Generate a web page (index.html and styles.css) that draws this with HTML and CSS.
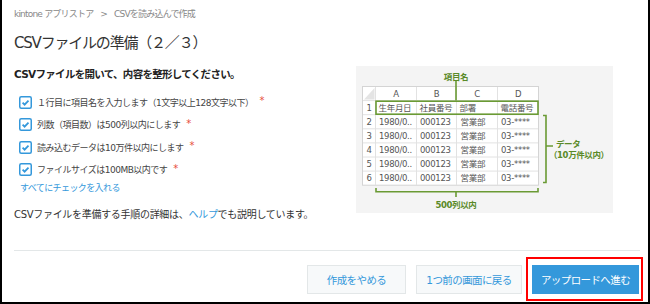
FILE: index.html
```html
<!DOCTYPE html>
<html lang="ja">
<head>
<meta charset="utf-8">
<title>CSVファイルの準備</title>
<link rel="stylesheet" href="styles.css">
</head>
<body>
<div class="page">
  <nav class="crumbs"><span>kintone アプリストア</span><span class="sep">&gt;</span><span>CSVを読み込んで作成</span></nav>
  <h1 class="title">CSVファイルの準備（２／３）</h1>
  <div class="content">
    <div class="main">
      <p class="lead">CSVファイルを開いて、内容を整形してください。</p>
      <ul class="checks">
        <li><svg class="box" viewBox="0 0 13 13"><rect x="0.75" y="0.75" width="11.5" height="11.5" rx="1.5" fill="#fff" stroke="#3498db" stroke-width="1.5"/><path d="M3.6 6.6 L5.6 8.6 L9.5 4.6" fill="none" stroke="#3498db" stroke-width="1.8"/></svg><span>１行目に項目名を入力します（1文字以上128文字以下）</span><span class="req">*</span></li>
        <li><svg class="box" viewBox="0 0 13 13"><rect x="0.75" y="0.75" width="11.5" height="11.5" rx="1.5" fill="#fff" stroke="#3498db" stroke-width="1.5"/><path d="M3.6 6.6 L5.6 8.6 L9.5 4.6" fill="none" stroke="#3498db" stroke-width="1.8"/></svg><span>列数（項目数）は500列以内にします</span><span class="req">*</span></li>
        <li><svg class="box" viewBox="0 0 13 13"><rect x="0.75" y="0.75" width="11.5" height="11.5" rx="1.5" fill="#fff" stroke="#3498db" stroke-width="1.5"/><path d="M3.6 6.6 L5.6 8.6 L9.5 4.6" fill="none" stroke="#3498db" stroke-width="1.8"/></svg><span>読み込むデータは10万件以内にします</span><span class="req">*</span></li>
        <li><svg class="box" viewBox="0 0 13 13"><rect x="0.75" y="0.75" width="11.5" height="11.5" rx="1.5" fill="#fff" stroke="#3498db" stroke-width="1.5"/><path d="M3.6 6.6 L5.6 8.6 L9.5 4.6" fill="none" stroke="#3498db" stroke-width="1.8"/></svg><span>ファイルサイズは100MB以内です</span><span class="req">*</span></li>
      </ul>
      <a class="check-all">すべてにチェックを入れる</a>
      <p class="help">CSVファイルを準備する手順の詳細は、<a class="link">ヘルプ</a>でも説明しています。</p>
    </div>
    <figure class="figure">
      <svg class="diagram" width="257" height="147" viewBox="0 0 257 147">
        <rect x="6.5" y="20.5" width="176" height="98.7" fill="#fff" stroke="#d4d4d4"/>
        <g stroke="#e2e2e2" stroke-width="1">
          <line x1="7" y1="34.6" x2="182" y2="34.6"/>
          <line x1="7" y1="48.7" x2="182" y2="48.7"/>
          <line x1="7" y1="62.8" x2="182" y2="62.8"/>
          <line x1="7" y1="76.9" x2="182" y2="76.9"/>
          <line x1="7" y1="91" x2="182" y2="91"/>
          <line x1="7" y1="105.1" x2="182" y2="105.1"/>
          <line x1="19.5" y1="21" x2="19.5" y2="119"/>
          <line x1="60.5" y1="21" x2="60.5" y2="119"/>
          <line x1="100.5" y1="21" x2="100.5" y2="119"/>
          <line x1="141.5" y1="21" x2="141.5" y2="119"/>
        </g>
        <polygon points="18.5,22 18.5,33.6 8,33.6" fill="#e4e4e4"/>
        <g class="cell">
          <text x="40" y="30.8" text-anchor="middle">A</text>
          <text x="80.5" y="30.8" text-anchor="middle">B</text>
          <text x="121" y="30.8" text-anchor="middle">C</text>
          <text x="162" y="30.8" text-anchor="middle">D</text>
          <text x="13" y="44.9" text-anchor="middle">1</text>
          <text x="13" y="59" text-anchor="middle">2</text>
          <text x="13" y="73.1" text-anchor="middle">3</text>
          <text x="13" y="87.2" text-anchor="middle">4</text>
          <text x="13" y="101.3" text-anchor="middle">5</text>
          <text x="13" y="115.4" text-anchor="middle">6</text>
          <text x="22.5" y="44.9">生年月日</text>
          <text x="63.5" y="44.9">社員番号</text>
          <text x="103.5" y="44.9">部署</text>
          <text x="144.5" y="44.9">電話番号</text>
          <text x="23" y="59">1980/0..</text><text x="64" y="59">000123</text><text x="104.5" y="59">営業部</text><text x="145" y="59">03-****</text>
          <text x="23" y="73.1">1980/0..</text><text x="64" y="73.1">000123</text><text x="104.5" y="73.1">営業部</text><text x="145" y="73.1">03-****</text>
          <text x="23" y="87.2">1980/0..</text><text x="64" y="87.2">000123</text><text x="104.5" y="87.2">営業部</text><text x="145" y="87.2">03-****</text>
          <text x="23" y="101.3">1980/0..</text><text x="64" y="101.3">000123</text><text x="104.5" y="101.3">営業部</text><text x="145" y="101.3">03-****</text>
          <text x="23" y="115.4">1980/0..</text><text x="64" y="115.4">000123</text><text x="104.5" y="115.4">営業部</text><text x="145" y="115.4">03-****</text>
        </g>
        <g fill="none" stroke="#6a9a34" stroke-width="1.6">
          <rect x="20" y="35.2" width="162" height="13"/>
          <line x1="100" y1="15" x2="100" y2="34.6"/>
          <path d="M187 49.5 H190 V116.5 H187 M190 80 H197"/>
          <path d="M20 122 V125.8 H182 V122 M100 125.8 V131"/>
        </g>
        <g class="note">
          <text x="100" y="14" text-anchor="middle">項目名</text>
          <text x="200" y="80.5">データ</text>
          <text x="193" y="91.5">（10万件以内）</text>
          <text x="100" y="141.5" text-anchor="middle">500列以内</text>
        </g>
      </svg>
    </figure>
  </div>
  <hr class="rule">
  <div class="actions">
    <button class="btn btn-cancel">作成をやめる</button>
    <button class="btn btn-back">1つ前の画面に戻る</button>
    <button class="btn btn-primary">アップロードへ進む</button>
  </div>
</div>
</body>
</html>
```
FILE: styles.css
```css
html, body {
  margin: 0;
  padding: 0;
  background: #fff;
}

.page {
  width: 650px;
  height: 304px;
  box-sizing: border-box;
  border: 2px solid #000;
  border-top: 0;
  padding: 0 8px 0 12px;
  font-family: "DejaVu Sans", "Noto Sans CJK JP", sans-serif;
  color: #333;
  overflow: hidden;
}

.crumbs {
  padding-top: 7px;
  height: 14px;
  line-height: 14px;
  font-size: 9px;
  color: #888;
  letter-spacing: -0.8px;
}

.crumbs .sep {
  margin: 0 7px;
}

.title {
  margin: 12px 0 0;
  font-size: 15px;
  line-height: 20px;
  font-weight: normal;
  letter-spacing: -1.2px;
  color: #333;
}

.content {
  display: flex;
  margin-top: 13px;
}

.main {
  width: 342px;
  flex: none;
}

.lead {
  margin: 0;
  font-size: 10.5px;
  font-weight: bold;
  line-height: 16px;
  letter-spacing: -0.7px;
  color: #222;
}

.checks {
  list-style: none;
  margin: 9px 0 0;
  padding: 0 0 0 5px;
}

.checks li {
  display: flex;
  align-items: center;
  height: 22.5px;
  font-size: 9px;
  letter-spacing: -0.5px;
  color: #444;
}

.box {
  width: 13px;
  height: 13px;
  margin-right: 5px;
  flex: none;
}

.req {
  color: #e74c3c;
  font-size: 10px;
  margin-left: 6px;
  align-self: flex-start;
  margin-top: 4px;
}

.check-all {
  display: block;
  padding-left: 6px;
  font-size: 9px;
  line-height: 14px;
  color: #3498db;
  letter-spacing: -0.6px;
}

.help {
  margin: 11.5px 0 0;
  font-size: 10px;
  line-height: 16px;
  letter-spacing: -0.3px;
  color: #333;
}

.link {
  color: #3498db;
}

.figure {
  margin: 0;
  width: 257px;
  height: 147px;
  background: #f4f4f4;
}

.diagram {
  display: block;
  font-family: "DejaVu Sans", "Noto Sans CJK JP", sans-serif;
}

.cell text {
  font-size: 8.5px;
  fill: #555;
  letter-spacing: -0.3px;
}

.note text {
  font-size: 8.5px;
  font-weight: bold;
  fill: #5a8a28;
  letter-spacing: -0.4px;
}

.rule {
  border: 0;
  border-top: 1px solid #e3e7e8;
  margin: 27.5px 0 0;
  height: 0;
}

.actions {
  display: flex;
  justify-content: flex-end;
  gap: 10px;
  margin-top: 14px;
  padding-right: 1px;
}

.btn {
  height: 29px;
  box-sizing: border-box;
  padding: 0;
  font-family: "DejaVu Sans", "Noto Sans CJK JP", sans-serif;
  font-size: 10.5px;
  letter-spacing: -0.6px;
  border: 1px solid #e3e7e8;
  background: #f7f9fa;
  color: #3498db;
}

.btn-cancel {
  width: 99px;
}

.btn-back {
  width: 106px;
}

.btn-primary {
  width: 107px;
  position: relative;
  background: #3498db;
  border-color: #3498db;
  color: #fff;
}

.btn-primary::after {
  content: "";
  position: absolute;
  left: -7px;
  right: -5px;
  top: -9px;
  bottom: -8px;
  border: 2px solid #f00;
}
```
